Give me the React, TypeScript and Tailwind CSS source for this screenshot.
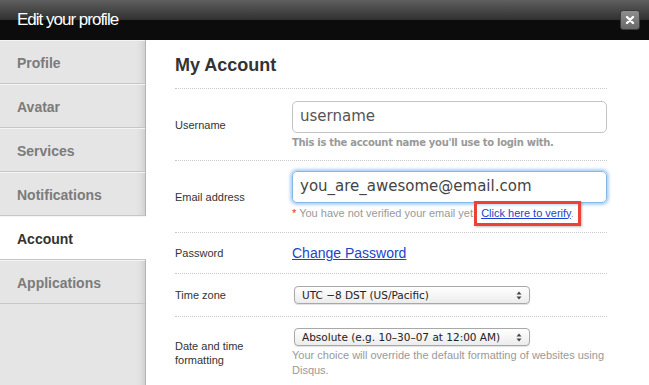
import React from "react";

const sans = "font-['Liberation_Sans','Helvetica',sans-serif]";
const lucida = "font-['DejaVu_Sans','Lucida_Grande',sans-serif]";

const nav = ["Profile", "Avatar", "Services", "Notifications", "Account", "Applications"];

function FakeSelect({ value }: { value: string }) {
  return (
    <div
      className={`flex h-[18px] w-[236px] items-center justify-between rounded-[4px] border border-[#a8a8a8] bg-gradient-to-b from-white to-[#ececec] pl-[7px] pr-[7px] text-[10.5px] text-[#222] shadow-[0_1px_1px_rgba(0,0,0,0.12)] ${lucida}`}
    >
      <span className="leading-none">{value}</span>
      <svg width="6" height="9" viewBox="0 0 6 9" className="text-[#444]">
        <path d="M3 0.5 L5.5 3.5 H0.5 Z" fill="currentColor" />
        <path d="M3 8.5 L5.5 5.5 H0.5 Z" fill="currentColor" />
      </svg>
    </div>
  );
}

function Row({
  label,
  height,
  children,
}: {
  label: React.ReactNode;
  height: string;
  children: React.ReactNode;
}) {
  return (
    <div className={`flex items-center border-t border-dotted border-[#c8c8c8] ${height}`}>
      <div className={`w-[117px] shrink-0 pr-4 text-[11px] leading-[14px] text-[#333] ${sans}`}>{label}</div>
      <div className="flex-1">{children}</div>
    </div>
  );
}

export default function App() {
  return (
    <div className={`flex h-screen w-full flex-col overflow-hidden bg-white ${sans}`}>
      {/* Header */}
      <header className="relative h-[40px] shrink-0 bg-[#0c0c0c]">
        <div className="absolute inset-x-0 top-0 h-[20px] bg-gradient-to-b from-[#606060] to-[#303030]" />
        <div className="relative flex h-full items-center justify-between pl-[17px] pr-[9px]">
          <h1 className="text-[17px] tracking-[-1px] text-white">Edit your profile</h1>
          <button
            className="flex h-[20px] w-[20px] items-center justify-center rounded-[3px] border border-[#3a3a3a] bg-gradient-to-b from-[#8e8e8e] to-[#686868]"
            aria-label="Close"
          >
            <svg width="10" height="10" viewBox="0 0 10 10">
              <path d="M2 2 L8 8 M8 2 L2 8" stroke="white" strokeWidth="2.4" strokeLinecap="round" />
            </svg>
          </button>
        </div>
      </header>

      <div className="flex min-h-0 flex-1">
        {/* Sidebar */}
        <aside className="w-[146px] shrink-0 border-r border-[#b4b4b4] bg-[#e5e5e5] shadow-[inset_-10px_0_10px_-10px_rgba(0,0,0,0.18)]">
          {nav.map((item) => {
            const active = item === "Account";
            return (
              <div
                key={item}
                className={`flex h-[44px] items-center border-b border-[#c6c6c6] pl-[17px] pt-[3px] text-[14px] font-bold shadow-[inset_0_1px_0_#f4f4f4] ${
                  active ? "relative -mr-px bg-white text-[#333]" : "text-[#7b7b7b]"
                }`}
              >
                {item}
              </div>
            );
          })}
        </aside>

        {/* Content */}
        <main className="flex-1 pl-[29px] pr-[42px]">
          <h2 className="flex h-[48px] items-center pt-[2px] text-[18px] font-bold text-[#333]">My Account</h2>

          <Row label="Username" height="h-[72px]">
            <div
              className={`flex h-[32px] items-center rounded-[5px] border border-[#c4c4c4] px-[7px] text-[15px] text-[#555] ${lucida}`}
            >
              username
            </div>
            <p className={`mt-[3px] text-[10px] font-bold leading-[13px] text-[#999] ${lucida} tracking-[-0.3px]`}>
              This is the account name you'll use to login with.
            </p>
          </Row>

          <Row label="Email address" height="h-[72px]">
            <div
              className={`mt-[3px] flex h-[32px] items-center rounded-[5px] border border-[#86b6e6] px-[7px] text-[15px] text-[#444] shadow-[0_0_3px_2px_rgba(110,170,235,0.55)] ${lucida}`}
            >
              you_are_awesome@email.com
            </div>
            <p className="mt-[-2px] text-[11px] leading-[13px] text-[#999]">
              <span className="text-[#d33]">*</span> You have not verified your email yet.{" "}
              <span className="-ml-[5px] inline-block border-[3px] border-[#ee4136] px-[4px] py-[3px] leading-[13px] shadow-[1px_1px_2px_rgba(0,0,0,0.25)]">
                <a href="#" className="text-[#1d3fcc] underline">
                  Click here to verify
                </a>
                .
              </span>
            </p>
          </Row>

          <Row label="Password" height="h-[41px]">
            <a href="#" className="text-[14px] text-[#1b44c8] underline">
              Change Password
            </a>
          </Row>

          <Row label="Time zone" height="h-[43px]">
            <div className="pl-[2px]">
              <FakeSelect value="UTC −8 DST (US/Pacific)" />
            </div>
          </Row>

          <Row label="Date and time formatting" height="h-[72px]">
            <div className="mt-[1px] pl-[2px]">
              <FakeSelect value="Absolute (e.g. 10–30–07 at 12:00 AM)" />
            </div>
            <p className="mt-[2px] text-[11px] leading-[15px] text-[#999]">
              Your choice will override the default formatting of websites using Disqus.
            </p>
          </Row>
        </main>
      </div>
    </div>
  );
}
